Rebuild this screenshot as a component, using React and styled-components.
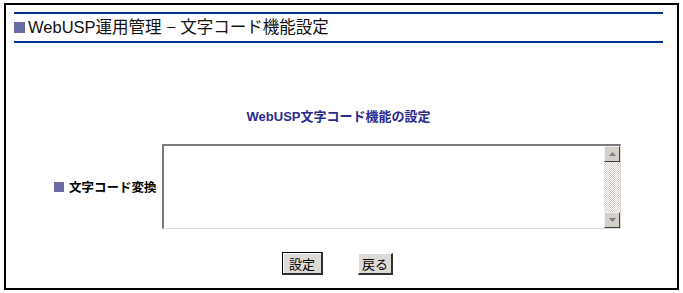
import React from 'react';
import styled, { createGlobalStyle } from 'styled-components';

const GlobalStyle = createGlobalStyle`
  body {
    margin: 0;
    background: #fff;
    font-family: "Noto Sans CJK JP", "Liberation Sans", sans-serif;
  }
`;

const Frame = styled.div`
  box-sizing: border-box;
  width: 675px;
  height: 287px;
  margin: 3px 0 0 4px;
  border: 2px solid #000;
  padding: 7px 14px 0 8px;
  display: flex;
  flex-direction: column;
`;

const Header = styled.div`
  height: 27px;
  border-top: 2px solid #00338f;
  border-bottom: 2px solid #00338f;
  display: flex;
  align-items: center;
  gap: 3px;
`;

const Bullet = styled.span`
  display: inline-block;
  width: ${(p) => p.$size}px;
  height: ${(p) => p.$size}px;
  background: #6b6ba6;
  flex: none;
`;

const Title = styled.h1`
  margin: 0;
  font-family: "Liberation Sans", "Noto Sans CJK JP", sans-serif;
  font-size: 16.5px;
  font-weight: 400;
  line-height: 27px;
  color: #111;
  white-space: nowrap;
`;

const SubTitle = styled.h2`
  margin: 66px 0 0;
  text-align: center;
  font-family: "Liberation Sans", "Noto Sans CJK JP", sans-serif;
  font-size: 13px;
  font-weight: 700;
  line-height: 16px;
  color: #2b2b8f;
`;

const FormRow = styled.div`
  margin-top: 19px;
  display: flex;
  align-items: center;
`;

const Label = styled.label`
  width: 148px;
  box-sizing: border-box;
  padding-left: 40px;
  display: flex;
  align-items: center;
  gap: 5px;
  font-size: 12.5px;
  font-weight: 700;
  color: #000;
  white-space: nowrap;
`;

const TextBox = styled.div`
  width: 459px;
  height: 85px;
  box-sizing: border-box;
  border-top: 2px solid #7a7a7a;
  border-left: 2px solid #7a7a7a;
  border-right: 1px solid #dcdcdc;
  border-bottom: 1px solid #dcdcdc;
  display: flex;
`;

const Area = styled.textarea`
  flex: 1;
  border: none;
  outline: none;
  resize: none;
  padding: 2px;
  font-family: "Noto Sans CJK JP", sans-serif;
  font-size: 12px;
`;

const ScrollBar = styled.div`
  width: 16px;
  display: flex;
  flex-direction: column;
  background: repeating-conic-gradient(#d4d0c8 0 25%, #fff 0 50%) 0 0 / 2px 2px;
`;

const ScrollButton = styled.div`
  height: 16px;
  box-sizing: border-box;
  background: #d4d0c8;
  border-top: 1px solid #f4f2ee;
  border-left: 1px solid #f4f2ee;
  border-right: 1px solid #404040;
  border-bottom: 1px solid #404040;
  display: flex;
  align-items: center;
  justify-content: center;
`;

const Track = styled.div`
  flex: 1;
`;

const Buttons = styled.div`
  margin-top: 23px;
  display: flex;
  justify-content: center;
  align-items: center;
  gap: 35px;
  padding-right: 2px;
`;

const Button = styled.button`
  box-sizing: border-box;
  height: ${(p) => (p.$default ? 23 : 22)}px;
  width: ${(p) => (p.$default ? 41 : 35)}px;
  padding: 0;
  background: #dedad5;
  font-family: "Noto Sans CJK JP", sans-serif;
  font-size: 13px;
  color: #000;
  border-top: 1px solid ${(p) => (p.$default ? '#000' : '#fff')};
  border-left: 1px solid ${(p) => (p.$default ? '#000' : '#fff')};
  border-right: 2px solid #303030;
  border-bottom: 2px solid #303030;
  box-shadow: ${(p) => (p.$default ? 'inset 1px 1px 0 #fff' : 'none')};
`;

function Arrow({ down }) {
  return (
    <svg width="7" height="4" viewBox="0 0 7 4">
      <polygon points={down ? '0,0 7,0 3.5,4' : '0,4 7,4 3.5,0'} fill="#808080" />
    </svg>
  );
}

export default function App() {
  return (
    <>
      <GlobalStyle />
      <Frame>
        <Header>
          <Bullet $size={11} />
          <Title>WebUSP運用管理 − 文字コード機能設定</Title>
        </Header>
        <SubTitle>WebUSP文字コード機能の設定</SubTitle>
        <FormRow>
          <Label>
            <Bullet $size={10} />
            文字コード変換
          </Label>
          <TextBox>
            <Area />
            <ScrollBar>
              <ScrollButton><Arrow /></ScrollButton>
              <Track />
              <ScrollButton><Arrow down /></ScrollButton>
            </ScrollBar>
          </TextBox>
        </FormRow>
        <Buttons>
          <Button $default>設定</Button>
          <Button>戻る</Button>
        </Buttons>
      </Frame>
    </>
  );
}
